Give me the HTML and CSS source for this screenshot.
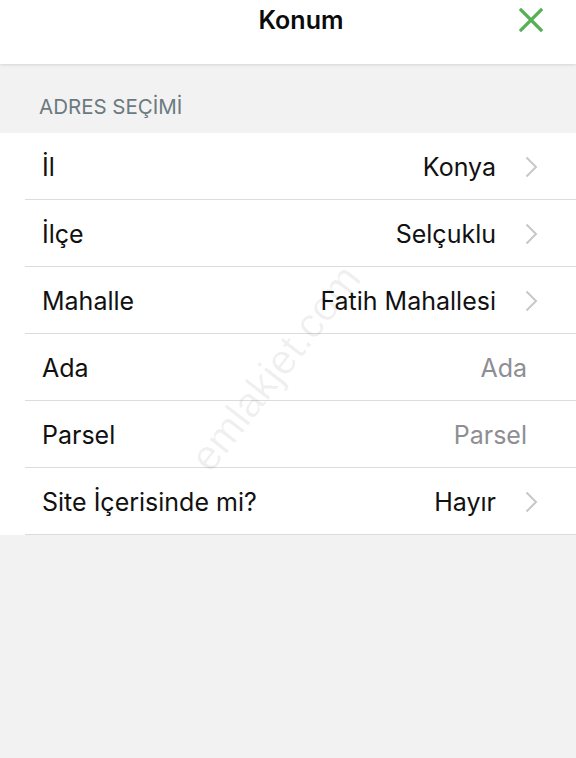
FILE: index.html
```html
<!DOCTYPE html>
<html lang="tr">
<head>
    <meta charset="UTF-8">
    <meta name="viewport" content="width=device-width, initial-scale=1.0">
    <title>Konum</title>
    <link rel="stylesheet" href="styles.css">
</head>
<body>
<header class="topbar">
    <h1 class="title">Konum</h1>
    <button class="close" aria-label="Kapat">
        <svg width="24" height="24" viewBox="0 0 24 24">
            <path d="M2 2 L22 22 M22 2 L2 22" stroke="#55b153" stroke-width="3.2" stroke-linecap="square" fill="none"/>
        </svg>
    </button>
</header>
<main class="content">
    <h2 class="section-title">ADRES SEÇİMİ</h2>
    <ul class="list">
        <li class="row">
            <span class="label">İl</span>
            <span class="value">Konya</span>
            <svg class="chevron" width="13" height="22" viewBox="0 0 13 22"><path d="M1.5 1.5 L11 11 L1.5 20.5" /></svg>
        </li>
        <li class="row">
            <span class="label">İlçe</span>
            <span class="value">Selçuklu</span>
            <svg class="chevron" width="13" height="22" viewBox="0 0 13 22"><path d="M1.5 1.5 L11 11 L1.5 20.5" /></svg>
        </li>
        <li class="row">
            <span class="label">Mahalle</span>
            <span class="value">Fatih Mahallesi</span>
            <svg class="chevron" width="13" height="22" viewBox="0 0 13 22"><path d="M1.5 1.5 L11 11 L1.5 20.5" /></svg>
        </li>
        <li class="row">
            <span class="label">Ada</span>
            <input class="field" type="text" placeholder="Ada">
        </li>
        <li class="row">
            <span class="label">Parsel</span>
            <input class="field" type="text" placeholder="Parsel">
        </li>
        <li class="row">
            <span class="label">Site İçerisinde mi?</span>
            <span class="value">Hayır</span>
            <svg class="chevron" width="13" height="22" viewBox="0 0 13 22"><path d="M1.5 1.5 L11 11 L1.5 20.5" /></svg>
        </li>
    </ul>
    <div class="watermark">emlakjet.com</div>
</main>
</body>
</html>
```

FILE: styles.css
```css
/* General */
html, body {
    margin: 0;
    padding: 0;
    height: 100%;
}

body {
    font-family: Inter, "Noto Sans", sans-serif;
    background-color: #f2f2f2;
    color: #111;
}

/* Top bar */
.topbar {
    position: relative;
    height: 64px;
    background: #fff;
    display: flex;
    justify-content: center;
    box-shadow: 0 1px 3px rgba(0, 0, 0, 0.12);
    z-index: 1;
}

.title {
    margin: 0;
    margin-left: 26px;
    padding-top: 5px;
    font-size: 25px;
    font-weight: 600;
    line-height: 30px;
    color: #0a0a0a;
}

.close {
    position: absolute;
    right: 33px;
    top: 8px;
    padding: 0;
    border: none;
    background: none;
    cursor: pointer;
}

/* Content */
.content {
    position: relative;
}

.section-title {
    margin: 0;
    padding: 29px 39px 13px;
    font-size: 20.5px;
    font-weight: 400;
    line-height: 27px;
    color: #6b7a7f;
}

.list {
    list-style: none;
    margin: 0;
    padding: 0 0 0 25px;
    background: #fff;
}

.row {
    display: flex;
    align-items: center;
    box-sizing: border-box;
    height: 67px;
    padding-top: 2px;
    padding-left: 17px;
    padding-right: 38px;
    border-bottom: 1px solid #dcdcdf;
    font-size: 25px;
}

.label {
    flex: 1;
}

.value {
    color: #111;
}

.chevron {
    margin-left: 29px;
    fill: none;
    stroke: #c8c8cc;
    stroke-width: 2;
}

.field {
    width: 200px;
    margin-right: 11px;
    padding: 0;
    border: none;
    outline: none;
    background: none;
    font: inherit;
    text-align: right;
}

.field::placeholder {
    color: #8e8e93;
}

.watermark {
    position: absolute;
    left: 152px;
    top: 280px;
    font-family: "Liberation Sans", sans-serif;
    font-size: 42px;
    color: rgba(0, 0, 0, 0.06);
    transform: rotate(-52deg);
    pointer-events: none;
}
```
